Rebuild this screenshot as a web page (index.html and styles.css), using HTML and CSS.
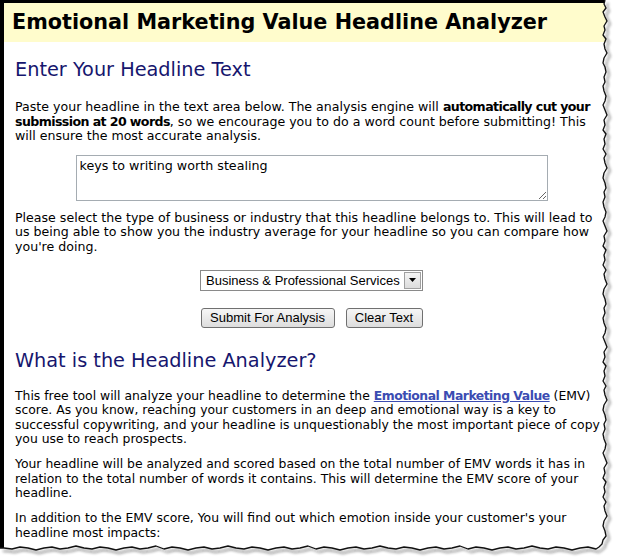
FILE: index.html
```html
<!DOCTYPE html>
<html>
<head>
<meta charset="utf-8">
<title>Emotional Marketing Value Headline Analyzer</title>
<link rel="stylesheet" href="styles.css">
</head>
<body>
<div class="shot">
  <div class="page">
    <div class="title">Emotional Marketing Value Headline Analyzer</div>
    <div class="content">
      <h2 class="h-first">Enter Your Headline Text</h2>
      <p class="p-intro">Paste your headline in the text area below. The analysis engine will <b>automatically cut your<br>submission at 20 words</b>, so we encourage you to do a word count before submitting! This<br>will ensure the most accurate analysis.</p>
      <div class="field-row"><textarea class="headline">keys to writing worth stealing</textarea></div>
      <p class="p-select">Please select the type of business or industry that this headline belongs to. This will lead to<br>us being able to show you the industry average for your headline so you can compare how<br>you're doing.</p>
      <div class="select-row">
        <div class="select">
          <span class="select-text">Business &amp; Professional Services</span>
          <span class="select-arrow"><svg width="7" height="4" viewBox="0 0 7 4"><path d="M0 0H7L3.5 4Z" fill="#000"/></svg></span>
        </div>
      </div>
      <div class="button-row">
        <button class="btn btn-submit" type="button">Submit For Analysis</button>
        <button class="btn btn-clear" type="button">Clear Text</button>
      </div>
      <h2 class="h-second">What is the Headline Analyzer?</h2>
      <div class="about">
        <p>This free tool will analyze your headline to determine the <a href="#" class="emv">Emotional Marketing Value</a> (EMV)<br>score. As you know, reaching your customers in an deep and emotional way is a key to<br>successful copywriting, and your headline is unquestionably the most important piece of copy<br>you use to reach prospects.</p>
        <p>Your headline will be analyzed and scored based on the total number of EMV words it has in<br>relation to the total number of words it contains. This will determine the EMV score of your<br>headline.</p>
        <p>In addition to the EMV score, You will find out which emotion inside your customer's your<br>headline most impacts:</p>
      </div>
    </div>
  </div>
  <svg class="torn" width="624" height="559" viewBox="0 0 624 559">
    <defs>
      <filter id="blur" x="-10%" y="-10%" width="120%" height="120%"><feGaussianBlur stdDeviation="1.4"/></filter>
    </defs>
    <path fill="#fff" d="M624 0 L605 0 L604 4 L606 8 L603 12 L605 17 L607 21 L604 26 L605 30 L603 35 L606 39 L604 44 L605 49 L607 53 L604 58 L603 63 L605 67 L606 72 L604 77 L605 82 L603 86 L604 91 L606 96 L605 101 L603 105 L605 110 L607 115 L604 120 L605 125 L603 130 L606 134 L604 139 L605 144 L603 149 L606 154 L604 158 L605 163 L607 168 L604 173 L603 178 L605 183 L606 188 L604 192 L605 197 L603 202 L604 207 L606 212 L605 217 L603 221 L605 226 L607 231 L604 236 L605 241 L603 246 L606 250 L604 255 L605 260 L603 265 L606 270 L604 274 L605 279 L607 284 L604 289 L603 294 L605 299 L606 304 L604 308 L605 313 L603 318 L604 323 L606 328 L605 333 L603 337 L605 342 L607 347 L604 352 L605 357 L603 362 L606 366 L604 371 L605 376 L603 381 L606 386 L604 390 L605 395 L607 400 L604 405 L603 410 L605 415 L606 420 L604 424 L605 429 L603 434 L604 439 L606 444 L605 449 L603 453 L605 458 L607 463 L604 468 L605 473 L603 478 L606 482 L604 487 L605 492 L603 497 L606 502 L604 506 L605 511 L607 516 L604 521 L603 526 L605 531 L606 536 L603 540 L602 544 L599 547 L596 549 L588 547 L580 548 L572 550 L564 548 L556 547 L548 549 L540 548 L532 546 L524 548 L516 549 L508 547 L500 548 L492 550 L484 548 L476 547 L468 549 L460 546 L452 548 L444 549 L436 547 L428 548 L420 550 L412 548 L404 547 L396 549 L388 548 L380 546 L372 548 L364 549 L356 547 L348 548 L340 550 L332 548 L324 547 L316 549 L308 546 L300 548 L292 549 L284 547 L276 548 L268 550 L260 548 L252 547 L244 549 L236 548 L228 546 L220 548 L212 549 L204 547 L196 548 L188 550 L180 548 L172 547 L164 549 L156 546 L148 548 L140 549 L132 547 L124 548 L116 550 L108 548 L100 547 L92 549 L84 548 L76 546 L68 548 L60 549 L52 547 L44 548 L36 550 L28 548 L20 547 L12 549 L4 548 L0 548 L0 559 L624 559 Z"/>
    <g class="edge-shadow" transform="translate(3 3)" filter="url(#blur)">
      <use href="#edge"/>
    </g>
    <path id="edge" class="edge" fill="none" d="M605 0 L604 4 L606 8 L603 12 L605 17 L607 21 L604 26 L605 30 L603 35 L606 39 L604 44 L605 49 L607 53 L604 58 L603 63 L605 67 L606 72 L604 77 L605 82 L603 86 L604 91 L606 96 L605 101 L603 105 L605 110 L607 115 L604 120 L605 125 L603 130 L606 134 L604 139 L605 144 L603 149 L606 154 L604 158 L605 163 L607 168 L604 173 L603 178 L605 183 L606 188 L604 192 L605 197 L603 202 L604 207 L606 212 L605 217 L603 221 L605 226 L607 231 L604 236 L605 241 L603 246 L606 250 L604 255 L605 260 L603 265 L606 270 L604 274 L605 279 L607 284 L604 289 L603 294 L605 299 L606 304 L604 308 L605 313 L603 318 L604 323 L606 328 L605 333 L603 337 L605 342 L607 347 L604 352 L605 357 L603 362 L606 366 L604 371 L605 376 L603 381 L606 386 L604 390 L605 395 L607 400 L604 405 L603 410 L605 415 L606 420 L604 424 L605 429 L603 434 L604 439 L606 444 L605 449 L603 453 L605 458 L607 463 L604 468 L605 473 L603 478 L606 482 L604 487 L605 492 L603 497 L606 502 L604 506 L605 511 L607 516 L604 521 L603 526 L605 531 L606 536 L603 540 L602 544 L599 547 L596 549 L588 547 L580 548 L572 550 L564 548 L556 547 L548 549 L540 548 L532 546 L524 548 L516 549 L508 547 L500 548 L492 550 L484 548 L476 547 L468 549 L460 546 L452 548 L444 549 L436 547 L428 548 L420 550 L412 548 L404 547 L396 549 L388 548 L380 546 L372 548 L364 549 L356 547 L348 548 L340 550 L332 548 L324 547 L316 549 L308 546 L300 548 L292 549 L284 547 L276 548 L268 550 L260 548 L252 547 L244 549 L236 548 L228 546 L220 548 L212 549 L204 547 L196 548 L188 550 L180 548 L172 547 L164 549 L156 546 L148 548 L140 549 L132 547 L124 548 L116 550 L108 548 L100 547 L92 549 L84 548 L76 546 L68 548 L60 549 L52 547 L44 548 L36 550 L28 548 L20 547 L12 549 L4 548 L0 548"/>
  </svg>
</div>
</body>
</html>
```
FILE: styles.css
```css
html, body {
  margin: 0;
  padding: 0;
  background: #fff;
}

.shot {
  position: relative;
  width: 624px;
  height: 559px;
  overflow: hidden;
}

.page {
  box-sizing: border-box;
  width: 610px;
  height: 553px;
  border-left: 4px solid #000;
  border-top: 3px solid #000;
  background: #fff;
  overflow: hidden;
  font-family: "DejaVu Sans", Verdana, sans-serif;
  font-size: 12.6px;
  color: #000;
}

.page b {
  letter-spacing: -0.6px;
}

.title {
  height: 39px;
  line-height: 39px;
  padding-left: 8px;
  background: #fffccc;
  font-size: 20.75px;
  font-weight: bold;
  white-space: nowrap;
}

.content {
  width: 593px;
  padding-left: 11px;
}

.content h2 {
  font-size: 19.3px;
  font-weight: normal;
  line-height: 22px;
  color: #16166e;
  white-space: nowrap;
  margin: 0;
}

.h-first {
  padding-top: 17px;
}

.h-second {
  padding-top: 22px;
}

.content p {
  margin: 0 0 10.5px;
  line-height: 14.5px;
  white-space: nowrap;
}

.content .p-intro {
  padding-top: 19px;
  margin-bottom: 11px;
}

.about {
  padding-top: 17px;
  font-size: 12.4px;
}

.field-row {
  display: flex;
  justify-content: center;
  margin-bottom: 10px;
}

.headline {
  box-sizing: border-box;
  width: 472px;
  height: 46px;
  margin: 0;
  padding: 2px 3px;
  border: 1px solid #a5acb2;
  font-family: "DejaVu Sans", Verdana, sans-serif;
  font-size: 12.7px;
  color: #000;
  background: #fff;
}

.select-row {
  display: flex;
  justify-content: center;
  padding-top: 5px;
}

.select {
  box-sizing: border-box;
  display: flex;
  align-items: center;
  width: 223px;
  height: 21px;
  border: 1px solid #8a8a8a;
  background: #fff;
  padding: 0 1px 0 5px;
  font-family: "Liberation Sans", Arial, sans-serif;
  font-size: 13px;
}

.select-text {
  flex: 1;
  white-space: nowrap;
}

.select-arrow {
  box-sizing: border-box;
  display: flex;
  align-items: center;
  justify-content: center;
  width: 17px;
  height: 17px;
  border: 1px solid #a0a0a0;
  background: linear-gradient(#f4f4f4, #dcdcdc);
}

.button-row {
  display: flex;
  justify-content: center;
  gap: 11px;
  margin-top: 17px;
}

.btn {
  box-sizing: border-box;
  height: 20px;
  margin: 0;
  padding: 0;
  border: 1px solid #707070;
  border-radius: 3px;
  background: linear-gradient(#f6f6f6, #dddddd);
  font-family: "Liberation Sans", Arial, sans-serif;
  font-size: 13px;
  color: #000;
}

.btn-submit {
  width: 134px;
}

.btn-clear {
  width: 77px;
}

.emv {
  color: #3b4cb2;
  font-weight: bold;
  letter-spacing: -0.5px;
  text-decoration: underline;
}

.torn {
  position: absolute;
  left: 0;
  top: 0;
}

.edge {
  stroke: #111;
  stroke-width: 1.3;
  stroke-linejoin: round;
}

.edge-shadow {
  stroke: #888;
  stroke-width: 2.5;
  opacity: 0.6;
}
```
